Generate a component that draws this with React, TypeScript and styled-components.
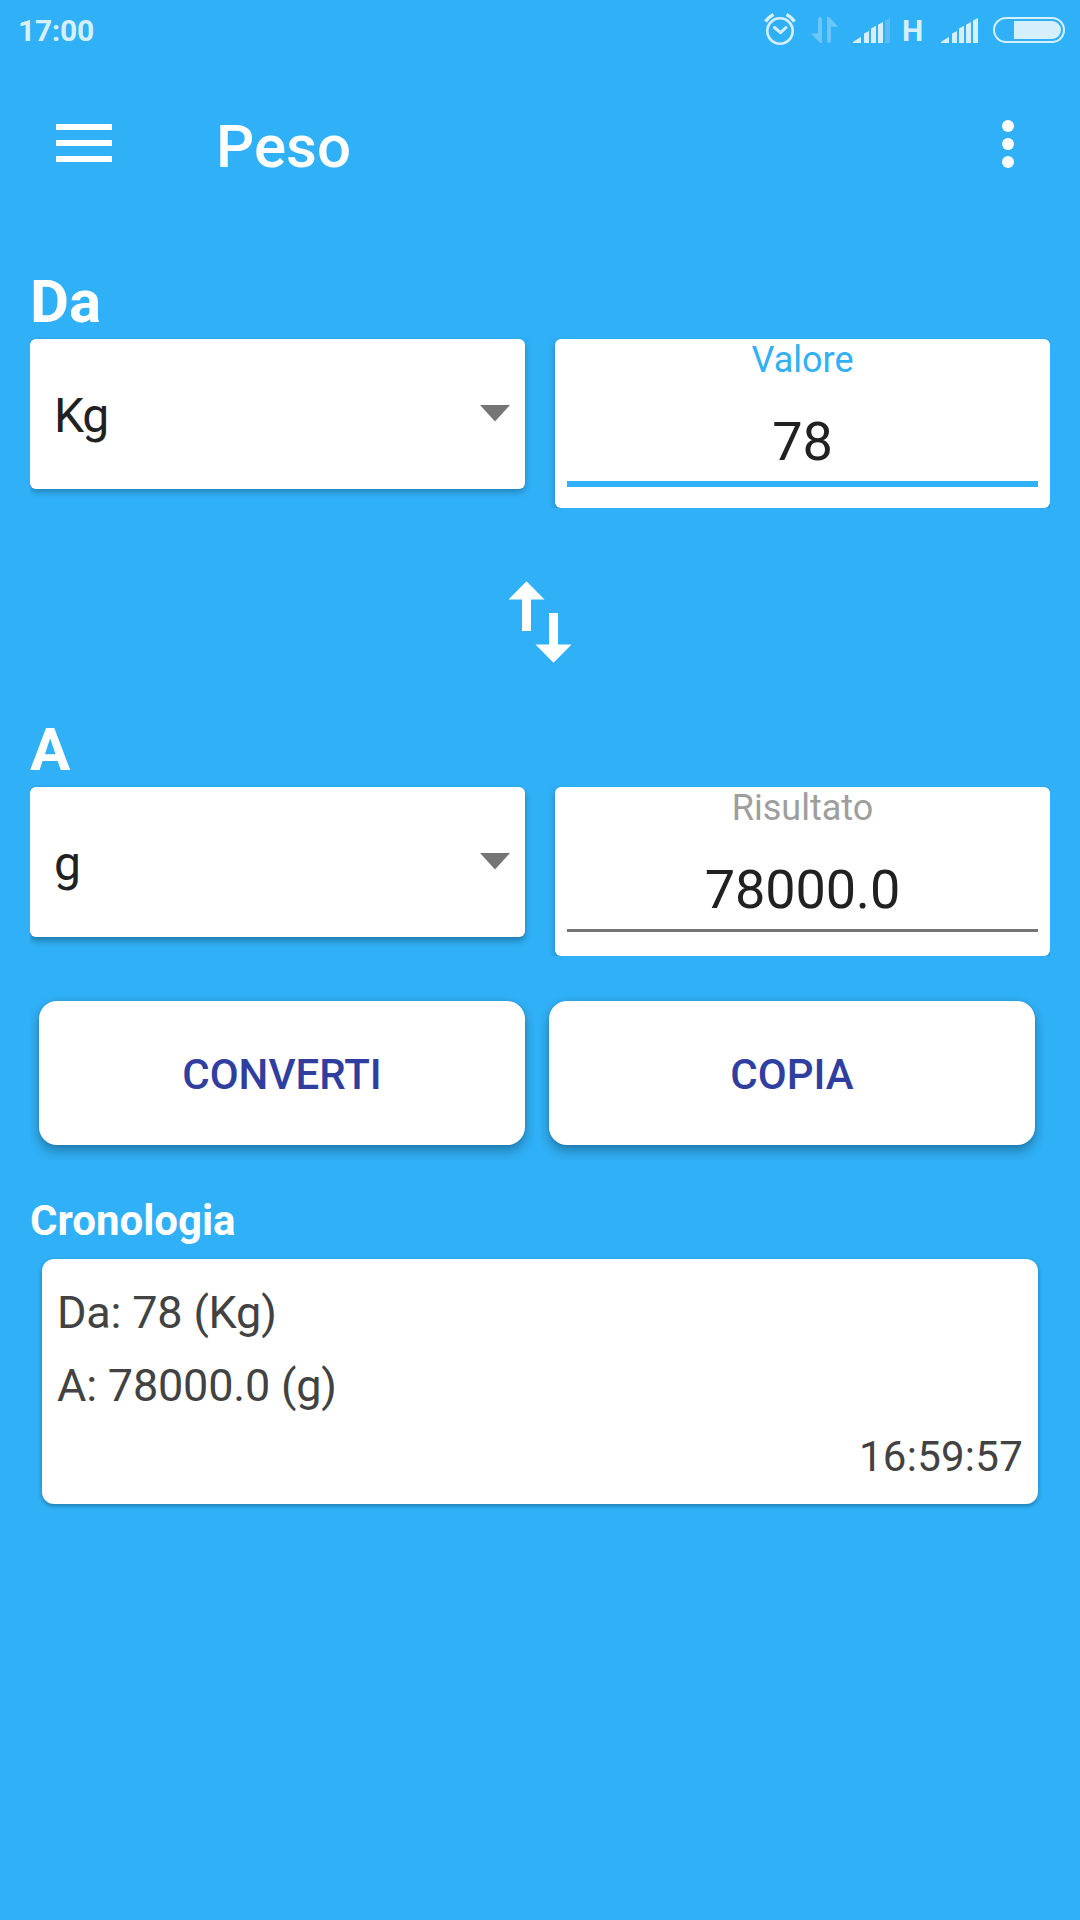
import React from 'react';
import styled, { createGlobalStyle } from 'styled-components';

const BLUE = '#30b0f6';

const GlobalStyle = createGlobalStyle`
  *, *::before, *::after { box-sizing: border-box; }
  body { margin: 0; background: ${BLUE}; }
  button { font: inherit; border: 0; padding: 0; background: none; }
`;

const Screen = styled.main`
  width: 1080px;
  height: 1920px;
  overflow: hidden;
  background: ${BLUE};
  font-family: Roboto, 'Noto Sans', sans-serif;
`;

const StatusBar = styled.header`
  display: flex;
  justify-content: space-between;
  height: 60px;
  padding-left: 18px;
  color: #d6effd;
`;

const Clock = styled.span`
  padding-top: 1px;
  font-size: 30px;
  font-weight: 700;
  letter-spacing: -0.3px;
  line-height: 60px;
`;

const StatusIcons = styled.div`
  display: flex;
`;

const NetworkType = styled.span`
  width: 39px;
  padding: 1px 0 0 1px;
  font-size: 30px;
  font-weight: 700;
  line-height: 60px;
`;

const Toolbar = styled.nav`
  display: flex;
  align-items: center;
  height: 168px;
  padding: 0 60px 0 56px;
`;

const IconButton = styled.button`
  display: flex;
  color: #fff;
`;

const MenuButton = styled(IconButton)`
  padding-bottom: 2px;
`;

const Title = styled.h1`
  flex: 1;
  margin: 0 0 0 104px;
  padding-top: 5px;
  color: #fff;
  font-size: 60px;
  font-weight: 500;
  line-height: 70px;
`;

const Content = styled.div`
  padding: 36px 30px 0;
`;

const Heading = styled.h2`
  height: 75px;
  margin: 0;
  color: #fff;
  font-size: 60px;
  font-weight: 700;
  line-height: 75px;
`;

const Row = styled.div`
  display: grid;
  grid-template-columns: 1fr 1fr;
  align-items: start;
  gap: 30px;
`;

const SelectCard = styled.div<{ $raised?: boolean }>`
  display: flex;
  align-items: center;
  justify-content: space-between;
  height: 150px;
  padding: 0 15px 2px 24px;
  border-radius: 6px;
  background: #fff;
  box-shadow: 0 ${p => (p.$raised ? 4 : 3)}px 6px rgba(0, 0, 0, ${p => (p.$raised ? 0.3 : 0.26)});
  clip-path: inset(-3px -8px -12px 0);
`;

const Unit = styled.span`
  padding-top: 5px;
  color: #212121;
  font-size: 48px;
  letter-spacing: -1.2px;
  line-height: 56px;
`;

const FieldCard = styled.label`
  display: flex;
  flex-direction: column;
  height: 169px;
  padding: 0 12px;
  border-radius: 6px;
  background: #fff;
  box-shadow: 0 3px 6px rgba(0, 0, 0, 0.28);
  clip-path: inset(-1px 0 0 -8px);
  text-align: center;
`;

const FieldLabel = styled.span<{ $active?: boolean }>`
  color: ${p => (p.$active ? BLUE : '#9e9e9e')};
  font-size: 36px;
  line-height: 42px;
`;

const FieldValue = styled.span<{ $active?: boolean }>`
  height: ${p => (p.$active ? 106 : 103)}px;
  padding-top: 21px;
  border-bottom: ${p => (p.$active ? `6px solid ${BLUE}` : '3px solid #757575')};
  color: #212121;
  font-size: 54px;
  letter-spacing: -0.15px;
  line-height: 79px;
`;

const SwapArea = styled.div`
  display: flex;
  justify-content: center;
  height: 204px;
  padding-top: 73px;
`;

const Actions = styled.div`
  display: flex;
  gap: 24px;
  margin-top: 45px;
  padding: 0 15px 0 9px;
`;

const ActionButton = styled.button`
  flex: 1;
  height: 144px;
  padding-top: 4px;
  border-radius: 18px;
  background: #fff;
  box-shadow: 0 6px 12px rgba(0, 0, 0, 0.3), 0 0 3px rgba(0, 0, 0, 0.12);
  clip-path: inset(-6px -9px -15px -9px);
  color: #303f9f;
  font-size: 42px;
  font-weight: 500;
  line-height: 140px;
`;

const HistoryTitle = styled.h3`
  height: 76px;
  margin: 38px 0 0;
  color: #fff;
  font-size: 42px;
  font-weight: 700;
  line-height: 76px;
`;

const HistoryCard = styled.article`
  display: flex;
  flex-direction: column;
  height: 245px;
  margin: 0 12px;
  padding: 17px 15px 0;
  border-radius: 12px;
  background: #fff;
  box-shadow: 0 2px 4px rgba(0, 0, 0, 0.3);
  color: #424242;
`;

const HistoryLine = styled.span`
  font-size: 45px;
  letter-spacing: -0.2px;
  line-height: 73px;
`;

const HistoryTime = styled.time`
  align-self: flex-end;
  font-size: 42px;
  letter-spacing: 0.25px;
  line-height: 69px;
`;

const AlarmIcon = () => (
  <svg width="48" height="60" viewBox="0 0 48 60" fill="none" stroke="currentColor">
    <circle cx="23" cy="31" r="12.7" strokeWidth="2.6" />
    <path d="M17.5 27.5l6 5.2 5.5-5.2" strokeWidth="3" strokeLinecap="round" strokeLinejoin="round" />
    <path d="M8.5 21.5q3-4.500 8-7M37.500 21.500q-3-4.500-8-7" strokeWidth="3.500" />
  </svg>
);

const DataIcon = () => (
  <svg width="47" height="60" viewBox="0 0 47 60" fill="#6bc6f9">
    <path d="M15 17q2 0 2 2v24h-2L5.800 33.500H13V19q0-2 2-2z" />
    <path d="M22 17h2l9.300 9.700H26V41q0 2-2 2t-2-2z" />
  </svg>
);

const SignalIcon = ({ bars, width }: { bars: number; width: number }) => (
  <svg width={width} height="60" viewBox={`0 0 ${width} 60`} fill="currentColor">
    {['M1 42l8-5.300v6.300h-8z', 'M12 33.500l5-2.500v12h-5z', 'M19 28.500l5-2.700v17.200h-5z',
      'M26 24.800l5-2.800v21h-5z', 'M33 20.500l5-2.500v25h-5z'].map((d, i) => (
      <path key={d} d={d} fillOpacity={i < bars ? 1 : 0.22} />
    ))}
  </svg>
);

const BatteryIcon = () => (
  <svg width="90" height="60" viewBox="0 0 90 60">
    <rect x="4" y="18" width="70" height="24" rx="12" fill="none" stroke="currentColor" strokeWidth="2" />
    <path d="M24 21h38a9 9 0 0 1 0 18H24z" fill="currentColor" />
  </svg>
);

const MenuIcon = () => (
  <svg width="56" height="38" viewBox="0 0 56 38" fill="currentColor">
    <path d="M0 0h56v6H0zM0 16h56v6H0zM0 32h56v6H0z" />
  </svg>
);

const MoreIcon = () => (
  <svg width="24" height="48" viewBox="0 0 24 48" fill="currentColor">
    <circle cx="12" cy="6" r="6" />
    <circle cx="12" cy="24" r="6" />
    <circle cx="12" cy="42" r="6" />
  </svg>
);

const DropdownIcon = () => (
  <svg width="30" height="17" viewBox="0 0 30 17" fill="#757575">
    <path d="M0 0h30L15 16.500z" />
  </svg>
);

const SwapIcon = () => (
  <svg width="64" height="82" viewBox="0 0 64 82" fill="currentColor">
    <path d="M18.500 0.300L36.500 18.500H23V50h-9V18.500H0.500z" />
    <path d="M41 32h9v31.500h13.500L45.500 81.700 27.500 63.500H41z" />
  </svg>
);

type ConversionProps = {
  heading: string;
  unit: string;
  label: string;
  value: string;
  active?: boolean;
};

const Conversion = ({ heading, unit, label, value, active }: ConversionProps) => (
  <section>
    <Heading>{heading}</Heading>
    <Row>
      <SelectCard $raised={!active}>
        <Unit>{unit}</Unit>
        <DropdownIcon />
      </SelectCard>
      <FieldCard>
        <FieldLabel $active={active}>{label}</FieldLabel>
        <FieldValue $active={active}>{value}</FieldValue>
      </FieldCard>
    </Row>
  </section>
);

export default function App() {
  return (
    <Screen>
      <GlobalStyle />
      <StatusBar>
        <Clock>17:00</Clock>
        <StatusIcons>
          <AlarmIcon />
          <DataIcon />
          <SignalIcon bars={4} width={49} />
          <NetworkType>H</NetworkType>
          <SignalIcon bars={5} width={50} />
          <BatteryIcon />
        </StatusIcons>
      </StatusBar>
      <Toolbar>
        <MenuButton aria-label="Menu"><MenuIcon /></MenuButton>
        <Title>Peso</Title>
        <IconButton aria-label="Altro"><MoreIcon /></IconButton>
      </Toolbar>
      <Content>
        <Conversion heading="Da" unit="Kg" label="Valore" value="78" active />
        <SwapArea>
          <IconButton aria-label="Scambia"><SwapIcon /></IconButton>
        </SwapArea>
        <Conversion heading="A" unit="g" label="Risultato" value="78000.0" />
        <Actions>
          <ActionButton>CONVERTI</ActionButton>
          <ActionButton>COPIA</ActionButton>
        </Actions>
        <HistoryTitle>Cronologia</HistoryTitle>
        <HistoryCard>
          <HistoryLine>Da: 78 (Kg)</HistoryLine>
          <HistoryLine>A: 78000.0 (g)</HistoryLine>
          <HistoryTime>16:59:57</HistoryTime>
        </HistoryCard>
      </Content>
    </Screen>
  );
}
